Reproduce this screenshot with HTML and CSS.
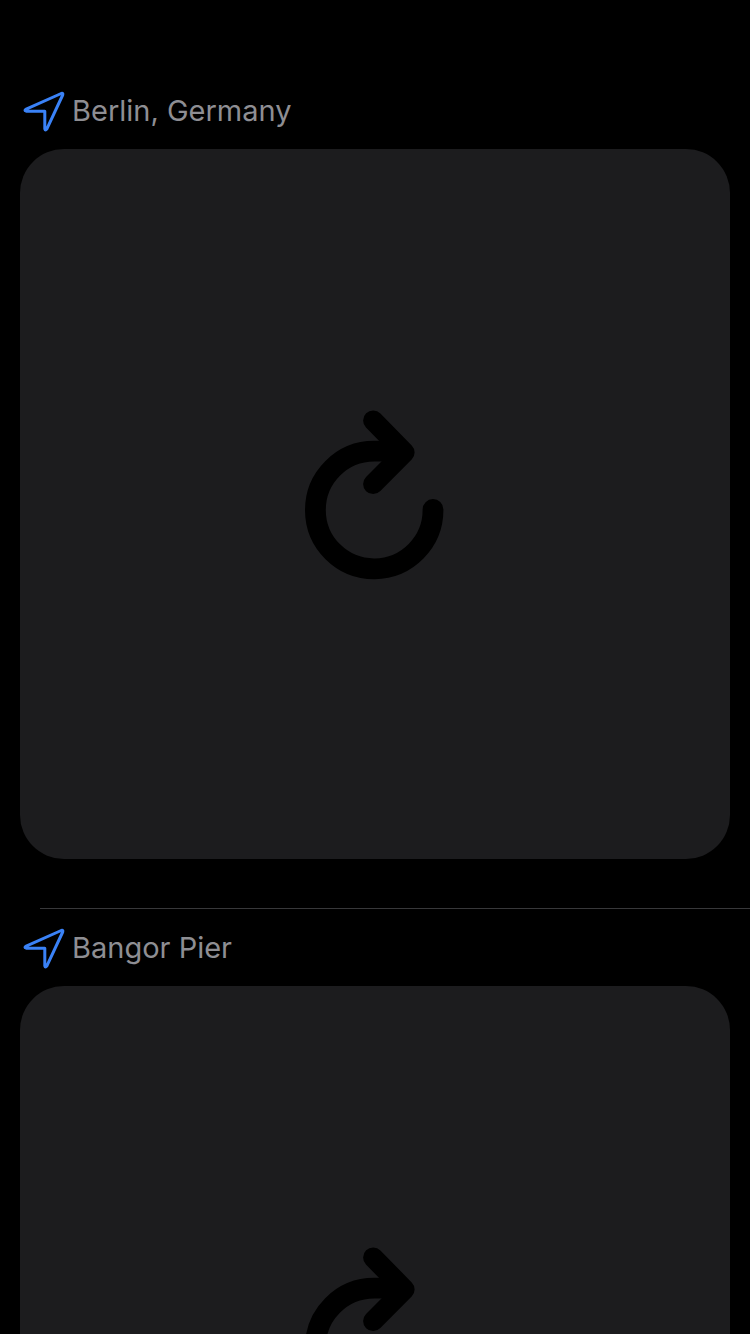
FILE: index.html
```html
<!DOCTYPE html>
<html lang="en">
<head>
<meta charset="utf-8">
<meta name="viewport" content="width=device-width, initial-scale=1">
<title>Locations</title>
<link rel="stylesheet" href="styles.css">
</head>
<body>
<svg class="symbols" aria-hidden="true">
  <symbol id="location" viewBox="0 0 42 42">
    <path d="M3.2 19.1 38.2 3.5Q40.5 2.7 39.7 5L23.9 38.8Q22.3 41 21.8 38.8V21.2H3.2Q.8 20.4 3.2 19.1Z" fill="none" stroke="currentColor" stroke-width="3" stroke-linejoin="round"/>
  </symbol>
  <symbol id="reload" viewBox="0 0 140 170">
    <g fill="none" stroke="currentColor" stroke-linecap="round" stroke-linejoin="round">
      <path d="M128 99.5A58.8 58.8 0 1 1 69.2 41.2H94" stroke-width="20.8"/>
      <path d="M68.2 10.5 99.5 42.5 68.2 74" stroke-width="20.2"/>
    </g>
  </symbol>
</svg>
<main class="screen">
  <ul class="places">
    <li class="place">
      <h2 class="place-title"><svg class="place-icon" aria-hidden="true"><use href="#location"/></svg>Berlin, Germany</h2>
      <button class="card" type="button" aria-label="Reload Berlin, Germany"><svg class="reload-icon" aria-hidden="true"><use href="#reload"/></svg></button>
    </li>
    <li class="place">
      <h2 class="place-title"><svg class="place-icon" aria-hidden="true"><use href="#location"/></svg>Bangor Pier</h2>
      <button class="card" type="button" aria-label="Reload Bangor Pier"><svg class="reload-icon" aria-hidden="true"><use href="#reload"/></svg></button>
    </li>
  </ul>
</main>
</body>
</html>
```
FILE: styles.css
```css
* {
  box-sizing: border-box;
}

body {
  margin: 0;
  background: #000;
  color: #8e8e93;
  font-family: Inter, "Liberation Sans", sans-serif;
}

.symbols {
  display: none;
}

.screen {
  height: 100vh;
  overflow-y: auto;
  scrollbar-width: none;
}

.places {
  margin: 0;
  padding: 72px 0 0;
  list-style: none;
}

.place {
  padding: 0 20px 49px;
}

.place + .place::before {
  content: "";
  display: block;
  height: 1px;
  margin: 0 -20px 0 20px;
  background: #38383a;
}

.place-title {
  display: flex;
  align-items: center;
  gap: 7px;
  height: 77px;
  margin: 0;
  padding-left: 3px;
  font-size: 29px;
  font-weight: 400;
  line-height: 36px;
}

.place-icon {
  flex: none;
  width: 42px;
  height: 42px;
  color: #3a82f7;
}

.card {
  display: flex;
  align-items: center;
  justify-content: center;
  width: 100%;
  aspect-ratio: 1;
  padding: 0 1px 18px 0;
  border: 0;
  border-radius: 44px;
  background: #1c1c1e;
  color: #000;
}

.reload-icon {
  width: 140px;
  height: 170px;
}
```
